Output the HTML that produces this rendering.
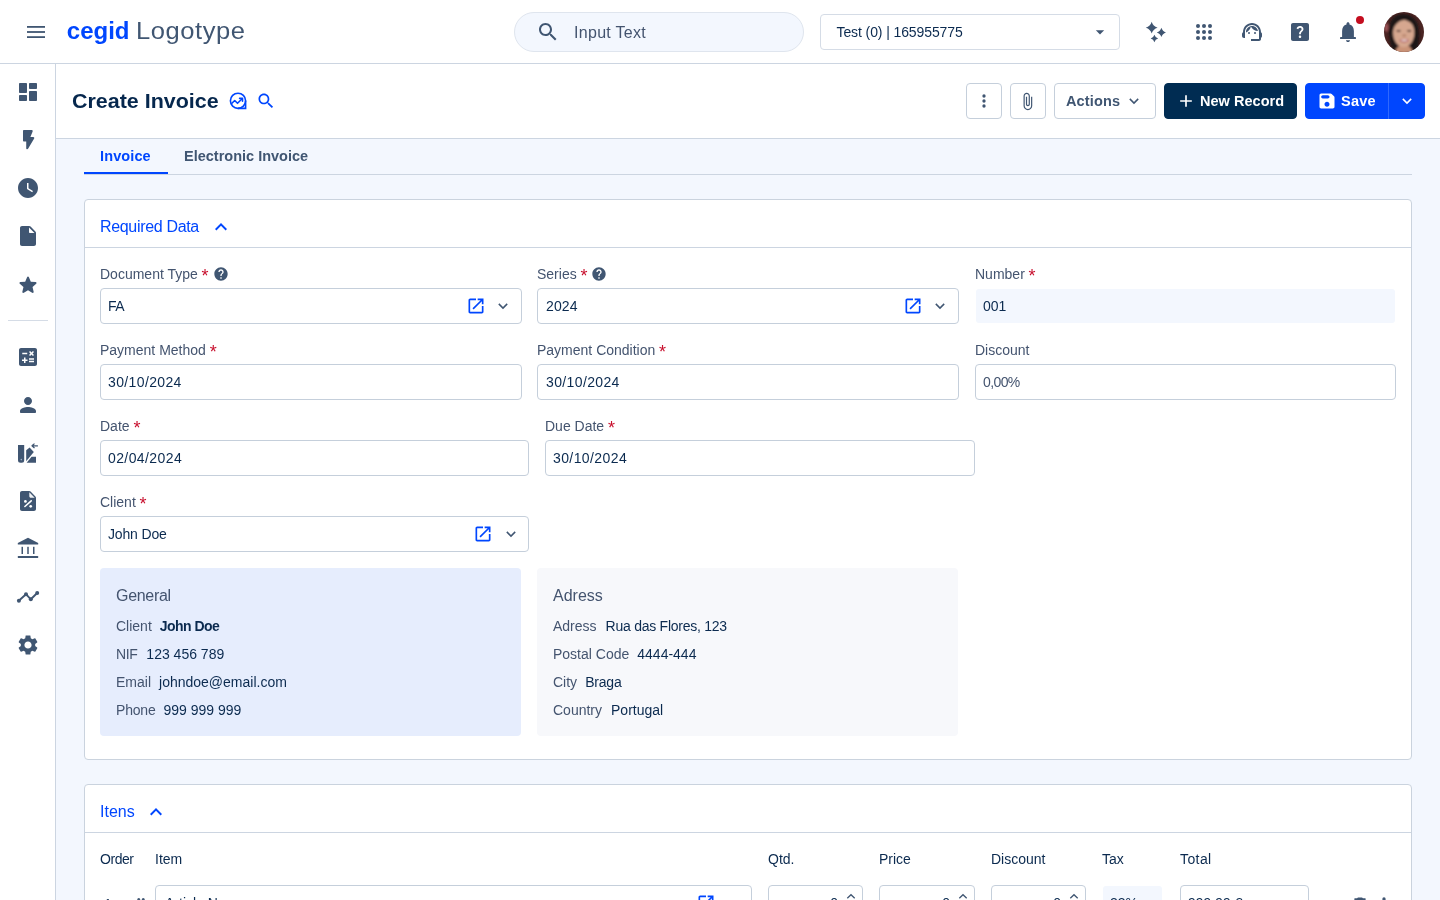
<!DOCTYPE html>
<html lang="en">
<head>
<meta charset="utf-8">
<title>Create Invoice</title>
<style>
*{box-sizing:border-box;margin:0;padding:0}
html,body{width:1440px;height:900px;overflow:hidden}
html{background:#fff}
body{opacity:.999}
body{font-family:"Liberation Sans",sans-serif;background:#f3f7fe;color:#0b2a4f;position:relative;font-size:14px}
.abs{position:absolute}
svg{display:block}
svg.abs,.t{z-index:3}
/* top bar */
#topbar{position:absolute;left:0;top:0;width:1440px;height:64px;background:#fff;border-bottom:1px solid #ccd5e1}
#sidebar{position:absolute;left:0;top:64px;width:56px;height:836px;background:#fff;border-right:1px solid #ccd5e1}
#pagehead{position:absolute;left:56px;top:64px;width:1384px;height:75px;background:#fff;border-bottom:1px solid #ccd5e1}
.t{position:absolute;white-space:nowrap;line-height:1}
.lbl{position:absolute;white-space:nowrap;font-size:14px;line-height:16px;color:#44546f}
.lbl i{font-style:normal;color:#c8102e;margin-left:3.800px;font-size:18px;line-height:0;position:relative;top:3.200px;letter-spacing:-1px}
.inp{position:absolute;height:36px;border:1px solid #c5cfdb;border-radius:4px;background:#fff;font-size:14px;line-height:34px;padding-left:7px;color:#0b2a4f;white-space:nowrap;overflow:hidden}
.inp.ro{border-color:transparent;background:#f3f7fe;background-clip:padding-box}
.panel{position:absolute;left:84px;width:1328px;background:#fff;border:1px solid #cad3de;border-radius:4px}
.panel .ph{position:absolute;left:0;top:0;width:100%;height:48px;border-bottom:1px solid #ccd5e1}
.btn{position:absolute;top:83px;height:36px;border:1px solid #c5cfdb;border-radius:4px;background:#fff}
.card{position:absolute;top:568px;width:421px;height:168px;border-radius:4px}
.card .ct{position:absolute;left:16px;top:19px;font-size:16px;line-height:18px;color:#44546f;white-space:nowrap}
.card .r{position:absolute;left:16px;font-size:14px;line-height:16px;white-space:nowrap;color:#0b2a4f}
.card .r span{color:#44546f;margin-right:8px}
.card .r em{font-style:normal;letter-spacing:-.25px}
.col{position:absolute;top:851px;font-size:14px;line-height:16px;color:#0b2a4f;white-space:nowrap}
</style>
</head>
<body>

<!-- ================= TOP BAR ================= -->
<div id="topbar">

  <svg class="abs" style="left:24px;top:20px" width="24" height="24" viewBox="0 0 24 24" fill="#405672"><rect x="3" y="6" width="18" height="1.800"/><rect x="3" y="11.100" width="18" height="1.800"/><rect x="3" y="16.200" width="18" height="1.800"/></svg>
  <svg class="abs" style="left:536px;top:20px;z-index:2" width="24" height="24" viewBox="0 0 24 24" fill="#405672"><path d="M15.5 14h-.79l-.28-.27C15.41 12.59 16 11.11 16 9.5 16 5.91 13.09 3 9.5 3S3 5.91 3 9.5 5.910 16 9.500 16c1.610 0 3.090-.59 4.230-1.570l.27.28v.79l5 4.990L20.490 19l-4.990-5zm-6 0C7.010 14 5 11.990 5 9.500S7.010 5 9.500 5 14 7.010 14 9.500 11.990 14 9.500 14z"/></svg>
  <svg class="abs" style="left:1090px;top:22px;z-index:2" width="20" height="20" viewBox="0 0 24 24" fill="#405672"><path d="M7 10l5 5 5-5z"/></svg>
  <!-- sparkles -->
  <svg class="abs" style="left:1144px;top:20px" width="24" height="24" viewBox="0 0 24 24" fill="#405672">
    <path d="M7.7 1.8 Q9 6.4 13.6 7.7 Q9 9 7.7 13.6 Q6.4 9 1.8 7.7 Q6.4 6.4 7.7 1.8z"/><path d="M17.4 7.8 Q18.45 11.35 22 12.4 Q18.45 13.45 17.4 17 Q16.35 13.45 12.8 12.4 Q16.35 11.35 17.4 7.8z"/><path d="M10.4 14.8 Q11.25 17.65 14.1 18.5 Q11.25 19.35 10.4 22.2 Q9.55 19.35 6.7 18.5 Q9.55 17.65 10.4 14.8z"/>
  </svg>
  <!-- apps -->
  <svg class="abs" style="left:1192px;top:20px" width="24" height="24" viewBox="0 0 24 24" fill="#405672"><circle cx="6" cy="6" r="2"/><circle cx="12" cy="6" r="2"/><circle cx="18" cy="6" r="2"/><circle cx="6" cy="12" r="2"/><circle cx="12" cy="12" r="2"/><circle cx="18" cy="12" r="2"/><circle cx="6" cy="18" r="2"/><circle cx="12" cy="18" r="2"/><circle cx="18" cy="18" r="2"/></svg>
  <!-- support agent -->
  <svg class="abs" style="left:1240px;top:20px" width="24" height="24" viewBox="0 0 24 24" fill="#405672"><path d="M21 12.220C21 6.730 16.740 3 12 3c-4.690 0-9 3.650-9 9.280-.6.340-1 .98-1 1.720v2c0 1.100.9 2 2 2h1v-6.100c0-3.870 3.130-7 7-7s7 3.130 7 7V19h-8v2h8c1.100 0 2-.9 2-2v-1.220c.59-.31 1-.92 1-1.640v-2.300c0-.7-.41-1.310-1-1.620z"/><circle cx="9" cy="13" r="1"/><circle cx="15" cy="13" r="1"/><path d="M18 11.030C17.520 8.180 15.040 6 12.050 6c-3.030 0-6.290 2.510-6.030 6.450 2.470-1.010 4.330-3.210 4.860-5.890 1.310 2.630 4 4.440 7.120 4.470z"/></svg>
  <!-- help center -->
  <svg class="abs" style="left:1288px;top:20px" width="24" height="24" viewBox="0 0 24 24" fill="#405672"><path d="M19 3H5c-1.100 0-2 .9-2 2v14c0 1.100.9 2 2 2h14c1.100 0 2-.9 2-2V5c0-1.100-.9-2-2-2zm-6.990 15c-.7 0-1.260-.56-1.260-1.260 0-.71.56-1.250 1.260-1.250.71 0 1.250.54 1.250 1.250-.01.69-.54 1.260-1.250 1.260zm3.010-7.400c-.76 1.110-1.480 1.460-1.870 2.170-.16.29-.22.48-.22 1.410h-1.820c0-.49-.08-1.290.31-1.980.49-.87 1.420-1.390 1.960-2.160.57-.81.25-2.330-1.370-2.330-1.060 0-1.580.8-1.800 1.480l-1.650-.7C9.010 7.150 10.220 6 11.990 6c1.480 0 2.490.67 3.010 1.520.44.72.7 2.070.02 3.080z"/></svg>
  <!-- bell -->
  <svg class="abs" style="left:1336px;top:20px" width="24" height="24" viewBox="0 0 24 24" fill="#405672"><path d="M12 2.200c-.83 0-1.500.67-1.500 1.500v.78C7.630 5.160 6.100 7.820 6.100 10.900V17h11.800v-6.100c0-3.070-1.540-5.740-4.400-6.420V3.700c0-.83-.67-1.500-1.500-1.500z"/><rect x="4" y="17" width="16" height="1.900" rx=".4"/><path d="M10 20.200h4c0 1-.9 1.800-2 1.800s-2-.8-2-1.800z"/></svg>
  <div class="abs" style="left:1356px;top:16px;width:8px;height:8px;border-radius:50%;background:#c40d1f"></div>
  <!-- avatar -->
  <svg class="abs" style="left:1384px;top:12px" width="40" height="40" viewBox="0 0 40 40">
    <defs><clipPath id="avc"><circle cx="20" cy="20" r="20"/></clipPath><filter id="avb" x="-20%" y="-20%" width="140%" height="140%"><feGaussianBlur stdDeviation="0.9"/></filter></defs>
    <g clip-path="url(#avc)">
      <rect width="40" height="40" fill="#4a2422"/>
      <g filter="url(#avb)">
        <ellipse cx="2.400" cy="15.500" rx="2" ry="4.200" fill="#9c5257"/>
        <path d="M19 2 C8 2 4 12 5 22 C5.500 30 7 36 10 41 L32 41 C35 34 36 26 35 18 C34 8 28 2 19 2z" fill="#1f1516"/>
        <path d="M11 41 C12 36 14 33 20 33 C26 33 27.500 36 29 41z" fill="#c99277"/>
        <ellipse cx="19.700" cy="20.800" rx="10.600" ry="14.400" fill="#d6a78f"/>
        <path d="M8 22 C7.500 12 11 5.500 19 5.200 C28 5 31.500 11 31.500 21 C30.500 15 28.500 11.500 24.500 9.500 C21.500 8 19.500 7.600 17.500 8.600 C12.500 10.500 9.500 15 8 22z" fill="#1f1516"/>
        <ellipse cx="14.600" cy="18.800" rx="2.300" ry="0.900" fill="#3a2420"/>
        <ellipse cx="25.200" cy="18.800" rx="2.300" ry="0.900" fill="#3a2420"/>
        <ellipse cx="20.200" cy="23.600" rx="2.200" ry="1.000" fill="#b07a62"/>
        <ellipse cx="20.200" cy="28.600" rx="4.600" ry="1.800" fill="#b45f66"/>
        <ellipse cx="20.200" cy="28.300" rx="3.400" ry="0.800" fill="#f3e9e4"/>
      </g>
    </g>
  </svg>

  <div class="t" id="logo1" style="left:66.800px;top:18.700px;font-size:24px;font-weight:bold;color:#0046fe">cegid</div>
  <div class="t" id="logo2" style="left:135.900px;top:19.900px;font-size:23px;letter-spacing:.5px;color:#405672;transform:scaleX(1.11);transform-origin:0 0">Logotype</div>
  <div class="abs" id="search" style="left:514px;top:12px;width:290px;height:40px;border-radius:20px;background:#f3f7fe;border:1px solid #dfe5ee"></div>
  <div class="t" id="searchtxt" style="left:574px;top:24.600px;font-size:16px;color:#44546f;letter-spacing:.3px">Input Text</div>
  <div class="abs" id="company" style="left:820px;top:14px;width:300px;height:36px;border-radius:4px;background:#fff;border:1px solid #d5dce6"></div>
  <div class="t" id="companytxt" style="left:836.500px;top:25px;font-size:14px;color:#0b2a4f;letter-spacing:-.1px">Test (0) | 165955775</div>
</div>

<!-- ================= SIDEBAR ================= -->
<div id="sidebar">
  <div class="abs" style="left:8px;top:256px;width:40px;height:1px;background:#d5dce6"></div>
  <svg class="abs" style="left:16px;top:16px" width="24" height="24" viewBox="0 0 24 24" fill="#405672"><path d="M4 13h6c.55 0 1-.45 1-1V4c0-.55-.45-1-1-1H4c-.55 0-1 .45-1 1v8c0 .55.45 1 1 1zm0 8h6c.55 0 1-.45 1-1v-4c0-.55-.45-1-1-1H4c-.55 0-1 .45-1 1v4c0 .55.45 1 1 1zm10 0h6c.55 0 1-.45 1-1v-8c0-.55-.45-1-1-1h-6c-.55 0-1 .45-1 1v8c0 .55.45 1 1 1zM13 4v4c0 .55.45 1 1 1h6c.55 0 1-.45 1-1V4c0-.55-.45-1-1-1h-6c-.55 0-1 .45-1 1z"/></svg>
  <svg class="abs" style="left:16px;top:64px" width="24" height="24" viewBox="0 0 24 24" fill="#405672"><path d="M8 2h7.700c.72 0 1.210.72.94 1.380L14.400 9.100h2.900c.78 0 1.260.85.870 1.520l-6.100 10.100c-.52.86-1.850.49-1.850-.52V13.400H8c-.55 0-1-.45-1-1V3c0-.55.45-1 1-1z"/></svg>
  <svg class="abs" style="left:16px;top:112px" width="24" height="24" viewBox="0 0 24 24" fill="#405672"><path d="M12 2C6.500 2 2 6.500 2 12s4.500 10 10 10 10-4.500 10-10S17.500 2 12 2zm4.200 14.200L11 13V7h1.500v5.200l4.500 2.700-.8 1.300z"/></svg>
  <svg class="abs" style="left:16px;top:160px" width="24" height="24" viewBox="0 0 24 24" fill="#405672"><path d="M6 2c-1.100 0-1.990.9-1.990 2L4 20c0 1.100.89 2 1.990 2H18c1.100 0 2-.9 2-2V8.830c0-.53-.21-1.040-.59-1.410l-4.830-4.830c-.37-.38-.88-.59-1.410-.59H6zm7 6V3.500L18.500 9H14c-.55 0-1-.45-1-1z"/></svg>
  <svg class="abs" style="left:16px;top:208.5px" width="24" height="24" viewBox="0 0 24 24" fill="#405672"><path d="M12 17.270l4.150 2.510c.76.46 1.690-.22 1.490-1.080l-1.100-4.720 3.670-3.180c.67-.58.31-1.680-.57-1.750l-4.830-.41-1.890-4.460c-.34-.81-1.500-.81-1.840 0L9.190 8.630l-4.830.41c-.88.07-1.240 1.170-.57 1.750l3.670 3.180-1.100 4.720c-.2.86.73 1.540 1.490 1.080l4.150-2.500z"/></svg>
  <svg class="abs" style="left:16px;top:281px" width="24" height="24" viewBox="0 0 24 24" fill="#405672"><path d="M19 3H5c-1.100 0-2 .9-2 2v14c0 1.100.9 2 2 2h14c1.100 0 2-.9 2-2V5c0-1.100-.9-2-2-2zm-5.970 4.060L14.090 6l1.410 1.410L16.910 6l1.060 1.060-1.410 1.410 1.410 1.410-1.060 1.060-1.410-1.400-1.410 1.410-1.060-1.060 1.410-1.410-1.410-1.420zm-6.780.66h5v1.500h-5v-1.500zM11.500 16h-2v2H8v-2H6v-1.500h2v-2h1.500v2h2V16zm6.500 1.250h-5v-1.500h5v1.500zm0-2.500h-5v-1.500h5v1.500z"/></svg>
  <svg class="abs" style="left:16px;top:329px" width="24" height="24" viewBox="0 0 24 24" fill="#405672"><path d="M12 12c2.210 0 4-1.790 4-4s-1.790-4-4-4-4 1.790-4 4 1.790 4 4 4zm0 2c-2.670 0-8 1.340-8 4v1c0 .55.45 1 1 1h14c.55 0 1-.45 1-1v-1c0-2.660-5.330-4-8-4z"/></svg>
  <svg class="abs" style="left:16px;top:377px" width="24" height="24" viewBox="0 0 24 24" fill="#405672"><path d="M2 3.900h6.200v15.400a2.500 2.500 0 0 1-2.500 2.500h-1.200a2.500 2.500 0 0 1-2.500-2.500z"/><circle cx="5.300" cy="18.600" r="0.800" fill="#9fb0c6"/><path d="M10.200 9.200l3.400-2.800 4.200 4.600-7.600 9.300z"/><path d="M10.600 21.700l5.000-5.900h4.400v5.900z"/><path d="M15.500 4.300l2.600-2.100.8.900-1.300 1.100h4.300v1.200h-4.300l1.300 1.100-.8.900-2.600-2.100z"/></svg>
  <svg class="abs" style="left:16px;top:425px" width="24" height="24" viewBox="0 0 24 24" fill="#405672"><path d="M6 2c-1.100 0-1.990.9-1.990 2L4 20c0 1.100.89 2 1.990 2H18c1.100 0 2-.9 2-2V8.830c0-.53-.21-1.040-.59-1.410l-4.830-4.830c-.37-.38-.88-.59-1.410-.59H6z"/><path d="M13.300 3.300l5.400 5.400h-3.900c-.83 0-1.500-.67-1.500-1.500z" fill="#fff" opacity=".92"/><circle cx="9.400" cy="12.400" r="1.350" fill="#fff"/><circle cx="14.700" cy="17.300" r="1.350" fill="#fff"/><path d="M8.900 17.500l6.300-5.600" stroke="#fff" stroke-width="1.600" stroke-linecap="round" fill="none"/></svg>
  <svg class="abs" style="left:16px;top:473px" width="24" height="24" viewBox="0 0 24 24" fill="#405672"><path d="M12 .800L1.800 5.900v1.700h20.400V5.900z"/><rect x="5.500" y="9.800" width="1.500" height="7.200"/><rect x="11.250" y="9.800" width="1.500" height="7.200"/><rect x="17" y="9.800" width="1.500" height="7.200"/><rect x="1.800" y="19" width="20.400" height="1.900" rx=".5"/></svg>
  <svg class="abs" style="left:16px;top:521px" width="24" height="24" viewBox="0 0 24 24" fill="#405672"><path d="M2.800 15.800L10 9.200l4.800 5.100L21.200 8" stroke="#405672" stroke-width="1.900" fill="none" stroke-linejoin="round"/><circle cx="2.900" cy="15.800" r="2"/><circle cx="10" cy="9.200" r="2"/><circle cx="14.800" cy="14.300" r="2"/><circle cx="21.200" cy="8" r="2"/></svg>
  <svg class="abs" style="left:16px;top:569px" width="24" height="24" viewBox="0 0 24 24" fill="#405672"><path d="M19.140 12.940c.04-.3.06-.61.06-.94 0-.32-.02-.64-.07-.94l2.030-1.580c.18-.14.23-.41.12-.61l-1.920-3.320c-.12-.22-.37-.29-.59-.22l-2.390.96c-.5-.38-1.030-.7-1.620-.94l-.36-2.540c-.04-.24-.24-.41-.48-.41h-3.840c-.24 0-.43.17-.47.41l-.36 2.540c-.59.24-1.130.57-1.620.94l-2.390-.96c-.22-.08-.47 0-.59.22L2.740 8.870c-.12.21-.08.47.12.61l2.030 1.580c-.05.3-.09.63-.09.940s.02.640.07.940l-2.030 1.580c-.18.14-.23.41-.12.61l1.920 3.320c.12.22.37.29.59.22l2.390-.96c.5.38 1.030.7 1.620.94l.36 2.540c.05.24.24.41.48.41h3.840c.24 0 .44-.17.47-.41l.36-2.540c.59-.24 1.130-.56 1.620-.94l2.390.96c.22.08.47 0 .59-.22l1.920-3.320c.12-.22.07-.47-.12-.61l-2.010-1.580zM12 15.600c-1.980 0-3.600-1.620-3.600-3.600s1.620-3.600 3.600-3.600 3.600 1.620 3.600 3.600-1.620 3.600-3.600 3.600z"/></svg>
</div>

<!-- ================= PAGE HEADER ================= -->
<div id="pagehead"></div>
<div class="t" id="title" style="left:71.500px;top:91px;font-size:20px;font-weight:bold;color:#06274d;transform:scaleX(1.072);transform-origin:0 0">Create Invoice</div>
<!-- header icons -->
<svg class="abs" style="left:228px;top:91px" width="20" height="20" viewBox="0 0 20 20" fill="none" stroke="#0046fe" stroke-width="1.600" stroke-linejoin="round"><circle cx="10" cy="9.800" r="7.600"/><path d="M17.600 9.800v7.600H10" stroke-linejoin="miter"/><path d="M3.900 12.300l2.800-2.800 2.800 2.800 4.600-4.500" stroke-linecap="round"/><path d="M11.600 7.400h2.900v2.900" stroke-linecap="round"/></svg>
<svg class="abs" style="left:256px;top:90.700px" width="20" height="20" viewBox="0 0 24 24" fill="#0046fe"><path d="M15.500 14h-.79l-.28-.27C15.410 12.590 16 11.110 16 9.500 16 5.910 13.090 3 9.500 3S3 5.910 3 9.500 5.910 16 9.500 16c1.610 0 3.090-.59 4.230-1.570l.27.28v.79l5 4.990L20.490 19l-4.990-5zm-6 0C7.010 14 5 11.990 5 9.500S7.010 5 9.500 5 14 7.010 14 9.500 11.990 14 9.500 14z"/></svg>
<svg class="abs" style="left:974px;top:91px" width="20" height="20" viewBox="0 0 24 24" fill="#405672"><circle cx="12" cy="6" r="2"/><circle cx="12" cy="12" r="2"/><circle cx="12" cy="18" r="2"/></svg>
<svg class="abs" style="left:1018px;top:91.5px" width="19" height="19" viewBox="0 0 24 24" fill="#405672"><path d="M16.500 6v11.500c0 2.210-1.790 4-4 4s-4-1.790-4-4V5c0-1.380 1.120-2.500 2.500-2.500s2.500 1.120 2.500 2.500v10.500c0 .55-.45 1-1 1s-1-.45-1-1V6H10v9.500c0 1.380 1.120 2.500 2.500 2.500s2.500-1.120 2.500-2.500V5c0-2.210-1.790-4-4-4S7 2.790 7 5v12.500c0 3.040 2.460 5.500 5.500 5.500s5.500-2.460 5.500-5.500V6h-1.500z"/></svg>
<svg class="abs" style="left:1126px;top:92.7px" width="16" height="16" viewBox="0 0 16 16" fill="none" stroke="#405672" stroke-width="1.5"><path d="M3.8 5.9L8 10.1L12.2 5.9"/></svg>
<svg class="abs" style="left:1176px;top:91px" width="20" height="20" viewBox="0 0 24 24" fill="#fff"><path d="M19 13h-6v6h-2v-6H5v-2h6V5h2v6h6v2z"/></svg>
<svg class="abs" style="left:1317px;top:91px" width="20" height="20" viewBox="0 0 24 24" fill="#fff"><path d="M17.590 3.590c-.38-.38-.89-.59-1.420-.59H5c-1.110 0-2 .9-2 2v14c0 1.100.9 2 2 2h14c1.100 0 2-.9 2-2V7.830c0-.53-.21-1.040-.59-1.410l-2.820-2.830zM12 19c-1.660 0-3-1.340-3-3s1.340-3 3-3 3 1.340 3 3-1.340 3-3 3zm1-10H7c-1.100 0-2-.9-2-2s.9-2 2-2h6c1.100 0 2 .9 2 2s-.9 2-2 2z"/></svg>
<svg class="abs" style="left:1399px;top:92.7px" width="16" height="16" viewBox="0 0 16 16" fill="none" stroke="#fff" stroke-width="1.5"><path d="M3.8 5.9L8 10.1L12.2 5.9"/></svg>
<div class="btn" style="left:966px;width:36px"></div>
<div class="btn" style="left:1010px;width:36px"></div>
<div class="btn" id="bActions" style="left:1054px;width:102px"></div>
<div class="t" style="left:1066px;top:93.700px;font-size:14.500px;letter-spacing:0.15px;font-weight:bold;color:#405672" id="tActions">Actions</div>
<div class="btn" id="bNew" style="left:1164px;width:133px;background:#002c52;border-color:#002c52"></div>
<div class="t" style="left:1200px;top:93.700px;font-size:14.500px;letter-spacing:0.03px;font-weight:bold;color:#fff" id="tNew">New Record</div>
<div class="btn" id="bSave" style="left:1305px;width:120px;background:#0046fe;border-color:#0046fe"></div>
<div class="abs" style="left:1388px;top:83px;width:1px;height:36px;background:#2f68fe"></div>
<div class="t" style="left:1341px;top:93.700px;font-size:14.500px;letter-spacing:0.25px;font-weight:bold;color:#fff" id="tSave">Save</div>

<!-- ================= TABS ================= -->
<div class="abs" style="left:84px;top:174px;width:1328px;height:1px;background:#ccd5e1"></div>
<div class="abs" style="left:84px;top:172px;width:84px;height:2px;background:#0046fe"></div>
<div class="t" id="tab1" style="left:100px;top:148.700px;font-size:14.500px;letter-spacing:0.12px;font-weight:bold;color:#0046fe">Invoice</div>
<div class="t" id="tab2" style="left:184px;top:148.700px;font-size:14.500px;letter-spacing:0px;font-weight:bold;color:#405672">Electronic Invoice</div>

<!-- ================= PANEL 1 ================= -->
<div class="panel" style="top:199px;height:561px"><div class="ph"></div></div>
<div class="t" id="req" style="left:100px;top:218.600px;font-size:16px;letter-spacing:-0.33px;color:#0046fe">Required Data</div>

<div class="lbl" id="l1" style="left:100px;top:266px">Document Type<i>*</i></div>
<div class="inp" style="left:100px;top:288px;width:422px;letter-spacing:-.5px">FA</div>
<div class="lbl" id="l2" style="left:537px;top:266px">Series<i>*</i></div>
<div class="inp" style="left:537px;top:288px;width:422px;padding-left:8px;letter-spacing:.15px">2024</div>
<div class="lbl" id="l3" style="left:975px;top:266px">Number<i>*</i></div>
<div class="inp ro" style="left:975px;top:288px;width:421px">001</div>

<div class="lbl" id="l4" style="left:100px;top:342px">Payment Method<i>*</i></div>
<div class="inp" style="left:100px;top:364px;width:422px;letter-spacing:.37px">30/10/2024</div>
<div class="lbl" id="l5" style="left:537px;top:342px">Payment Condition<i>*</i></div>
<div class="inp" style="left:537px;top:364px;width:422px;padding-left:8px;letter-spacing:.37px">30/10/2024</div>
<div class="lbl" id="l6" style="left:975px;top:342px">Discount</div>
<div class="inp" style="left:975px;top:364px;width:421px;color:#44546f;letter-spacing:-.6px">0,00%</div>

<div class="lbl" id="l7" style="left:100px;top:418px">Date<i>*</i></div>
<div class="inp" style="left:100px;top:440px;width:429px;letter-spacing:.4px">02/04/2024</div>
<div class="lbl" id="l8" style="left:545px;top:418px">Due Date<i>*</i></div>
<div class="inp" style="left:545px;top:440px;width:430px;letter-spacing:.4px">30/10/2024</div>

<div class="lbl" id="l9" style="left:100px;top:494px">Client<i>*</i></div>
<div class="inp" style="left:100px;top:516px;width:429px;letter-spacing:-.15px">John Doe</div>

<div class="card" style="left:100px;background:#e6edfd">
  <div class="ct" style="letter-spacing:-.3px">General</div>
  <div class="r" style="top:50px"><span>Client</span><b style="letter-spacing:-.55px">John Doe</b></div>
  <div class="r" style="top:78px"><span style="letter-spacing:-.4px;margin-right:9px">NIF</span>123 456 789</div>
  <div class="r" style="top:106px"><span>Email</span>johndoe@email.com</div>
  <div class="r" style="top:134px"><span style="letter-spacing:-.2px">Phone</span>999 999 999</div>
</div>
<div class="card" style="left:537px;background:#f7f8fb">
  <div class="ct">Adress</div>
  <div class="r" style="top:50px"><span style="margin-right:9px">Adress</span><em>Rua das Flores, 123</em></div>
  <div class="r" style="top:78px"><span>Postal Code</span>4444-444</div>
  <div class="r" style="top:106px"><span>City</span><em style="letter-spacing:-.2px">Braga</em></div>
  <div class="r" style="top:134px"><span style="margin-right:9px">Country</span>Portugal</div>
</div>

<!-- ================= PANEL 2 ================= -->
<div class="panel" style="top:784px;height:200px"><div class="ph"></div></div>
<div class="t" id="itens" style="left:100px;top:804px;font-size:16px;color:#0046fe">Itens</div>
<div class="col" style="left:100px;letter-spacing:-.45px">Order</div>
<div class="col" style="left:155px">Item</div>
<div class="col" style="left:768px">Qtd.</div>
<div class="col" style="left:879px">Price</div>
<div class="col" style="left:991px">Discount</div>
<div class="col" style="left:1102px">Tax</div>
<div class="col" style="left:1180px;letter-spacing:.4px">Total</div>
<!-- form icons -->
<svg class="abs" style="left:209px;top:215px" width="24" height="24" viewBox="0 0 24 24" fill="#0046fe"><path d="M12 8l-6 6 1.410 1.410L12 10.830l4.590 4.580L18 14z"/></svg>
<svg class="abs" style="left:144px;top:800px" width="24" height="24" viewBox="0 0 24 24" fill="#0046fe"><path d="M12 8l-6 6 1.410 1.410L12 10.830l4.590 4.580L18 14z"/></svg>
<svg class="abs" style="left:213px;top:266px" width="16" height="16" viewBox="0 0 24 24" fill="#405672"><path d="M12 2C6.480 2 2 6.480 2 12s4.480 10 10 10 10-4.480 10-10S17.520 2 12 2zm1 17h-2v-2h2v2zm2.070-7.750l-.9.920C13.450 12.900 13 13.500 13 15h-2v-.5c0-1.100.45-2.100 1.170-2.830l1.240-1.260c.37-.36.59-.86.59-1.410 0-1.100-.9-2-2-2s-2 .9-2 2H8c0-2.210 1.790-4 4-4s4 1.790 4 4c0 .88-.36 1.680-.93 2.250z"/></svg>
<svg class="abs" style="left:591.3px;top:266px" width="16" height="16" viewBox="0 0 24 24" fill="#405672"><path d="M12 2C6.480 2 2 6.480 2 12s4.480 10 10 10 10-4.480 10-10S17.520 2 12 2zm1 17h-2v-2h2v2zm2.070-7.750l-.9.920C13.450 12.900 13 13.500 13 15h-2v-.5c0-1.100.45-2.100 1.170-2.830l1.240-1.260c.37-.36.59-.86.59-1.410 0-1.100-.9-2-2-2s-2 .9-2 2H8c0-2.210 1.790-4 4-4s4 1.790 4 4c0 .88-.36 1.680-.93 2.250z"/></svg>
<svg class="abs" style="left:465.5px;top:295.9px" width="20" height="20" viewBox="0 0 24 24" fill="#0046fe"><path d="M19 19H5V5h7V3H5c-1.110 0-2 .9-2 2v14c0 1.100.89 2 2 2h14c1.100 0 2-.9 2-2v-7h-2v7zM14 3v2h3.590l-9.830 9.830 1.410 1.410L19 6.410V10h2V3h-7z"/></svg>
<svg class="abs" style="left:495.4px;top:297.8px" width="16" height="16" viewBox="0 0 16 16" fill="none" stroke="#405672" stroke-width="1.5"><path d="M3.8 5.9L8 10.1L12.2 5.9"/></svg>
<svg class="abs" style="left:902.5px;top:295.9px" width="20" height="20" viewBox="0 0 24 24" fill="#0046fe"><path d="M19 19H5V5h7V3H5c-1.110 0-2 .9-2 2v14c0 1.100.89 2 2 2h14c1.100 0 2-.9 2-2v-7h-2v7zM14 3v2h3.590l-9.830 9.830 1.410 1.410L19 6.410V10h2V3h-7z"/></svg>
<svg class="abs" style="left:932.4px;top:297.8px" width="16" height="16" viewBox="0 0 16 16" fill="none" stroke="#405672" stroke-width="1.5"><path d="M3.8 5.9L8 10.1L12.2 5.9"/></svg>
<svg class="abs" style="left:473px;top:523.9px" width="20" height="20" viewBox="0 0 24 24" fill="#0046fe"><path d="M19 19H5V5h7V3H5c-1.110 0-2 .9-2 2v14c0 1.100.89 2 2 2h14c1.100 0 2-.9 2-2v-7h-2v7zM14 3v2h3.590l-9.830 9.830 1.410 1.410L19 6.410V10h2V3h-7z"/></svg>
<svg class="abs" style="left:503px;top:525.8px" width="16" height="16" viewBox="0 0 16 16" fill="none" stroke="#405672" stroke-width="1.5"><path d="M3.8 5.9L8 10.1L12.2 5.9"/></svg>
<!-- first item row (cut off by viewport) -->
<div class="t" style="left:104px;top:896.500px;font-size:14px;color:#0b2a4f">1</div>
<svg class="abs" style="left:132px;top:894.5px" width="18" height="18" viewBox="0 0 24 24" fill="#405672"><circle cx="9" cy="6" r="2"/><circle cx="15" cy="6" r="2"/><circle cx="9" cy="12" r="2"/><circle cx="15" cy="12" r="2"/><circle cx="9" cy="18" r="2"/><circle cx="15" cy="18" r="2"/></svg>
<div class="inp" style="left:155px;top:885px;width:597px;padding-left:9px">Article Name</div>
<svg class="abs" style="left:695.5px;top:893px" width="20" height="20" viewBox="0 0 24 24" fill="#0046fe"><path d="M19 19H5V5h7V3H5c-1.110 0-2 .9-2 2v14c0 1.100.89 2 2 2h14c1.100 0 2-.9 2-2v-7h-2v7zM14 3v2h3.590l-9.830 9.830 1.410 1.410L19 6.410V10h2V3h-7z"/></svg>
<div class="inp" style="left:768px;top:885px;width:95px;text-align:right;padding-right:24px">0</div>
<svg class="abs" style="left:845px;top:890px" width="12" height="28" viewBox="0 0 12 28" fill="none" stroke="#405672" stroke-width="1.300"><path d="M2.300 8.200L6 4.700l3.700 3.500"/><path d="M2.300 19.800L6 23.300l3.700-3.500"/></svg>
<div class="inp" style="left:879px;top:885px;width:96px;text-align:right;padding-right:24px">0</div>
<svg class="abs" style="left:957px;top:890px" width="12" height="28" viewBox="0 0 12 28" fill="none" stroke="#405672" stroke-width="1.300"><path d="M2.300 8.200L6 4.700l3.700 3.500"/><path d="M2.300 19.800L6 23.300l3.700-3.500"/></svg>
<div class="inp" style="left:991px;top:885px;width:95px;text-align:right;padding-right:24px">0</div>
<svg class="abs" style="left:1068px;top:890px" width="12" height="28" viewBox="0 0 12 28" fill="none" stroke="#405672" stroke-width="1.300"><path d="M2.300 8.200L6 4.700l3.700 3.500"/><path d="M2.300 19.800L6 23.300l3.700-3.500"/></svg>
<div class="inp ro" style="left:1102px;top:885px;width:61px">23%</div>
<div class="inp" style="left:1180px;top:885px;width:129px">999,99 €</div>
<svg class="abs" style="left:1350.4px;top:894.5px" width="20" height="20" viewBox="0 0 24 24" fill="#405672"><path d="M6 19c0 1.100.9 2 2 2h8c1.100 0 2-.9 2-2V9c0-1.100-.9-2-2-2H8c-1.100 0-2 .9-2 2v10zM18 4h-2.500l-.71-.71c-.18-.18-.44-.29-.7-.29H9.910c-.26 0-.52.11-.7.29L8.500 4H6c-.55 0-1 .45-1 1s.45 1 1 1h12c.55 0 1-.45 1-1s-.45-1-1-1z"/></svg>
<svg class="abs" style="left:1374.4px;top:894.2px" width="20" height="20" viewBox="0 0 24 24" fill="#405672"><circle cx="12" cy="6" r="2"/><circle cx="12" cy="12" r="2"/><circle cx="12" cy="18" r="2"/></svg>


</body>
</html>
